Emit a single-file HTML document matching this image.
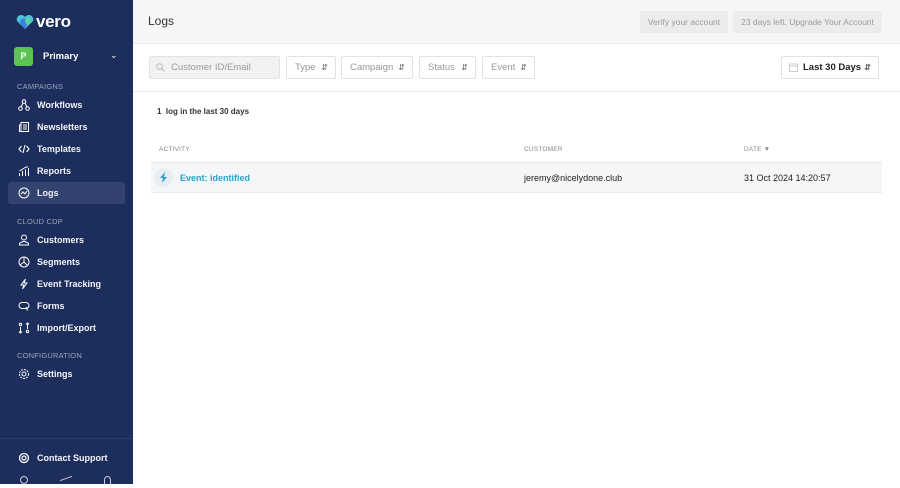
<!DOCTYPE html>
<html><head><meta charset="utf-8"><style>
*{box-sizing:border-box;margin:0;padding:0}
body{width:900px;height:484px;overflow:hidden;font-family:"Liberation Sans",Arial,sans-serif;background:#fff;position:relative}
.sb{position:absolute;left:0;top:0;width:133px;height:484px;background:#1d2d5c;color:#fff}
.logo{position:absolute;left:15px;top:12px;display:flex;align-items:center}
.logo span{font-size:17px;font-weight:bold;margin-left:1px;letter-spacing:-0.3px}
.prim{position:absolute;left:14px;top:47px;display:flex;align-items:center;font-size:9.5px;font-weight:bold}
.pb{width:19px;height:19px;background:#5dc353;border-radius:3px;font-size:9px;text-align:center;line-height:19px;margin-right:10px}
.chev{position:absolute;left:110px;top:50px;font-size:9px}
.sec{position:absolute;left:17px;font-size:7.5px;color:#9aa4bf;letter-spacing:0.2px}
.it{position:absolute;left:8px;width:117px;height:22px;display:flex;align-items:center;font-size:9px;font-weight:bold;padding-left:10px;border-radius:3px;color:#f2f4f8}
.it svg{width:12px;height:12px;margin-right:7px}
.act{background:#33426e}
.top{position:absolute;left:133px;top:0;right:0;height:44px;background:#f6f6f7;border-bottom:1px solid #eaeaea}
.top h1{position:absolute;left:15px;top:14px;font-size:12px;font-weight:normal;color:#333}
.tb{position:absolute;top:11px;height:22px;background:#ececec;color:#9a9a9a;font-size:8.5px;line-height:22px;padding:0 6px;border-radius:2px;white-space:nowrap}
.fb{position:absolute;left:133px;top:45px;right:0;height:47px;border-bottom:1px solid #e6e6e6}
.f{position:absolute;top:11px;height:23px;border:1px solid #e2e2e2;border-radius:2px;font-size:9.5px;color:#999;line-height:21px;padding-left:8px;white-space:nowrap}
.f i{position:absolute;right:7px;top:0;font-style:normal;font-size:8px;color:#666}
.cnt{position:absolute;left:157px;top:107px;font-size:8px;font-weight:bold;color:#333}
.th{position:absolute;top:146px;font-size:6.5px;color:#888;letter-spacing:0.2px}
.row{position:absolute;left:151px;top:162px;width:731px;height:31px;background:#f5f6f8;border-top:1px solid #ebebeb;border-bottom:1px solid #ebebeb}
.row span{position:absolute;top:10px;font-size:9px;color:#222}
</style></head><body>
<div class="sb">
 <div class="logo"><svg width="20" height="16" viewBox="0 0 20 16"><path d="M10 15 L2 7 A4.5 4.5 0 0 1 10 3 A4.5 4.5 0 0 1 18 7 Z" fill="#4cc3d8"/><path d="M10 15 L5 9 A4 4 0 0 1 13 8 Z" fill="#3a7ee0"/><circle cx="13" cy="7" r="3" fill="#5ad29a"/></svg><span>vero</span></div>
 <div class="prim"><div class="pb">P</div>Primary</div><div class="chev">&#8964;</div>
 <div class="sec" style="top:82px">CAMPAIGNS</div>
 <div class="it" style="top:94px"><svg viewBox="0 0 12 12" fill="none" stroke="#fff" stroke-width="1"><circle cx="6" cy="2.5" r="1.8"/><circle cx="2.5" cy="9.5" r="1.8"/><circle cx="9.5" cy="9.5" r="1.8"/><path d="M5 4L3 8M7 4l2 4"/></svg>Workflows</div>
 <div class="it" style="top:116px"><svg viewBox="0 0 12 12" fill="none" stroke="#fff" stroke-width="1"><rect x="3" y="1.5" width="7.5" height="9"/><path d="M3 4H1.5v6.5H3M5 4h4M5 6h4M5 8h4"/></svg>Newsletters</div>
 <div class="it" style="top:138px"><svg viewBox="0 0 12 12" fill="none" stroke="#fff" stroke-width="1.1"><path d="M3.5 3L1 6l2.5 3M8.5 3L11 6 8.5 9M7 2L5 10"/></svg>Templates</div>
 <div class="it" style="top:160px"><svg viewBox="0 0 12 12" fill="none" stroke="#fff" stroke-width="1"><path d="M1.5 11V8M4.5 11V6M7.5 11V4.5M10.5 11V3M1.5 6L8 2l2 0"/></svg>Reports</div>
 <div class="it act" style="top:182px"><svg viewBox="0 0 12 12" fill="none" stroke="#fff" stroke-width="1"><circle cx="6" cy="6" r="5"/><path d="M3 7l2-2 2 2 2-3"/></svg>Logs</div>
 <div class="sec" style="top:217px">CLOUD CDP</div>
 <div class="it" style="top:229px"><svg viewBox="0 0 12 12" fill="none" stroke="#fff" stroke-width="1"><circle cx="6" cy="3.5" r="2.5"/><path d="M1.5 11V9.5Q6 5.5 10.5 9.5V11Z"/></svg>Customers</div>
 <div class="it" style="top:251px"><svg viewBox="0 0 12 12" fill="none" stroke="#fff" stroke-width="1"><circle cx="6" cy="6" r="5"/><path d="M6 1v5l3 3M6 6L2 9"/></svg>Segments</div>
 <div class="it" style="top:273px"><svg viewBox="0 0 12 12" fill="none" stroke="#fff" stroke-width="1"><path d="M7.5 1L3 7h3l-1.5 4L9 5H6z"/></svg>Event Tracking</div>
 <div class="it" style="top:295px"><svg viewBox="0 0 12 12" fill="none" stroke="#fff" stroke-width="1"><rect x="1" y="2.5" width="10" height="6" rx="3"/><path d="M8 7l1.5 3.5"/></svg>Forms</div>
 <div class="it" style="top:317px"><svg viewBox="0 0 12 12" fill="none" stroke="#fff" stroke-width="1"><circle cx="2.5" cy="2.5" r="1.2"/><circle cx="9.5" cy="9.5" r="1.2"/><path d="M2.5 5v6M1 9.5l1.5 1.5L4 9.5M9.5 7V1M8 2.5L9.5 1 11 2.5"/></svg>Import/Export</div>
 <div class="sec" style="top:351px">CONFIGURATION</div>
 <div class="it" style="top:363px"><svg viewBox="0 0 12 12" fill="none" stroke="#fff" stroke-width="1"><circle cx="6" cy="6" r="4.5" stroke-dasharray="2 1"/><circle cx="6" cy="6" r="2"/></svg>Settings</div>
 <div style="position:absolute;left:0;right:0;top:438px;border-top:1px solid #2c3c69"></div>
 <div class="it" style="top:447px"><svg viewBox="0 0 12 12" fill="none" stroke="#fff" stroke-width="1.3"><circle cx="6" cy="6" r="4.5"/><circle cx="6" cy="6" r="2"/></svg>Contact Support</div>
 <div style="position:absolute;top:476px;left:20px;width:8px;height:8px;border:1px solid #ccd;border-radius:50%"></div>
 <div style="position:absolute;top:478px;left:60px;width:12px;height:8px;border-top:1px solid #ccd;transform:skewY(-20deg)"></div>
 <div style="position:absolute;top:476px;left:104px;width:7px;height:8px;border:1px solid #ccd;border-radius:50% 50% 0 0;border-bottom:none"></div>
</div>
<div class="top"><h1>Logs</h1>
 <div class="tb" style="left:507px;width:88px;text-align:center">Verify your account</div>
 <div class="tb" style="left:600px;width:149px;text-align:center">23 days left. Upgrade Your Account</div>
</div>
<div class="fb">
 <div class="f" style="left:16px;width:131px;background:#f2f2f3;padding-left:21px">Customer ID/Email<svg style="position:absolute;left:6px;top:6px" width="9" height="9" viewBox="0 0 9 9" fill="none" stroke="#bbb"><circle cx="3.5" cy="3.5" r="2.8"/><path d="M5.5 5.5l3 3"/></svg></div>
 <div class="f" style="left:153px;width:50px">Type<i>&#8693;</i></div>
 <div class="f" style="left:208px;width:72px">Campaign<i>&#8693;</i></div>
 <div class="f" style="left:286px;width:57px">Status<i>&#8693;</i></div>
 <div class="f" style="left:349px;width:53px">Event<i>&#8693;</i></div>
 <div class="f" style="left:648px;width:98px;color:#222;font-weight:bold;font-size:9.5px;padding-left:21px">Last 30 Days<i>&#8693;</i><svg style="position:absolute;left:7px;top:6px" width="9" height="9" viewBox="0 0 9 9" fill="none" stroke="#ccc"><rect x="0.5" y="1" width="8" height="7.5"/><path d="M0.5 3h8"/></svg></div>
</div>
<div class="cnt">1&nbsp; log in the last 30 days</div>
<div class="th" style="left:159px">ACTIVITY</div>
<div class="th" style="left:524px">CUSTOMER</div>
<div class="th" style="left:744px">DATE &#9660;</div>
<div class="row">
 <div style="position:absolute;left:3px;top:5px;width:19px;height:19px;border-radius:50%;background:#e8edf3"><svg style="position:absolute;left:5px;top:4px" width="9" height="11" viewBox="0 0 9 11"><path d="M6 0L1 6h3l-1 5 5-6H5z" fill="#2a9fd6"/></svg></div>
 <span style="left:29px;color:#2aa3c9;font-weight:bold">Event: identified</span>
 <span style="left:373px">jeremy@nicelydone.club</span>
 <span style="left:593px">31 Oct 2024 14:20:57</span>
</div>
</body></html>
